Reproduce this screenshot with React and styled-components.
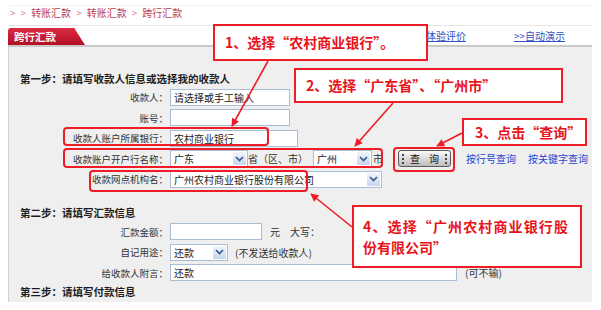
import React from "react";
import styled, { createGlobalStyle } from "styled-components";

const GlobalStyle = createGlobalStyle`
  html, body { margin: 0; padding: 0; background: #fff; }
  body { font-family: "Noto Sans CJK SC", "Noto Sans", sans-serif; }
`;

const Page = styled.div`
  position: relative;
  width: 601px;
  height: 310px;
  overflow: hidden;
  background: #fff;
`;

const TopRule = styled.div`
  margin: 5px 9px 0 10px;
  height: 1px;
  background: #f1f1f1;
`;

const Breadcrumb = styled.div`
  display: flex;
  align-items: center;
  gap: 5px;
  height: 13px;
  padding-left: 10px;
  font-size: 10px;
  line-height: 13px;
  color: #b8405c;
`;

const Crumb = styled.span`
  color: ${(p) => (p.$sep ? "#d98296" : "#b8405c")};
`;

const Frame = styled.div`
  margin: 6px 0 0 8px;
  width: 584px;
`;

const Header = styled.div`
  display: flex;
  align-items: flex-end;
  height: 19px;
  border-top: 1px solid #e6e6e6;
`;

const Tab = styled.div`
  width: 77px;
  height: 17px;
  box-sizing: border-box;
  padding-left: 6px;
  border-radius: 3px 0 0 0;
  clip-path: polygon(0 0, 86% 0, 100% 100%, 0 100%);
  background: linear-gradient(#dc2a40, #b30f26);
  color: #fff;
  font-size: 10.5px;
  font-weight: 700;
  line-height: 17px;
`;

const HeaderLinks = styled.div`
  display: flex;
  gap: 48px;
  margin: 0 27px 0 auto;
  align-self: center;
`;

const HeaderLink = styled.span`
  font-size: 10px;
  line-height: 13px;
  color: #2f4fc4;
  text-decoration: underline;
`;

const TabRule = styled.div`
  height: 2px;
  background: #cacaca;
`;

const Panel = styled.div`
  height: 255px;
  box-sizing: border-box;
  background: #efefef;
  border-left: 1px solid #cfcfcf;
  padding: 25px 0 0 11px;
`;

const StepTitle = styled.div`
  height: 14px;
  margin-top: ${(p) => p.$mt || 0}px;
  margin-bottom: ${(p) => p.$mb || 0}px;
  font-size: 10.5px;
  line-height: 14px;
  font-weight: 700;
  color: #1e1e1e;
`;

const Row = styled.div`
  display: flex;
  align-items: center;
  height: 20.5px;
`;

const Label = styled.span`
  flex-shrink: 0;
  width: 148px;
  margin-right: 2px;
  text-align: right;
  font-size: 9.5px;
  color: #333;
`;

const TextBox = styled.div`
  flex-shrink: 0;
  width: ${(p) => p.$w}px;
  height: 17px;
  box-sizing: border-box;
  border: 1px solid #a9bdd6;
  background: #fff;
  padding-left: 3px;
  font-size: 10px;
  line-height: 15px;
  color: #222;
  white-space: nowrap;
  overflow: hidden;
`;

const Select = styled.div`
  flex-shrink: 0;
  display: flex;
  width: ${(p) => p.$w}px;
  height: 17px;
  box-sizing: border-box;
  margin-left: ${(p) => p.$ml || 0}px;
  border: 1px solid #a9bdd6;
  background: #fff;
  font-size: 10px;
  line-height: 15px;
  color: #222;
`;

const SelectValue = styled.span`
  flex: 1;
  padding-left: 3px;
  white-space: nowrap;
  overflow: hidden;
`;

const SelectArrow = styled.span`
  display: flex;
  align-items: center;
  justify-content: center;
  width: 13px;
  border: 1px solid #fff;
  background: linear-gradient(#f0f5fc, #c6d6ee);
`;

const Note = styled.span`
  flex-shrink: 0;
  margin-left: ${(p) => p.$ml || 0}px;
  font-size: 10px;
  color: #333;
  white-space: nowrap;
`;

const QueryButton = styled.div`
  flex-shrink: 0;
  display: flex;
  align-items: center;
  justify-content: space-between;
  margin-left: 15px;
  width: 53px;
  height: 17px;
  box-sizing: border-box;
  padding: 0 3px;
  border: 1px solid #5a5a5a;
  border-radius: 3px;
  background: linear-gradient(#fafafa, #d8d8d8 55%, #bdbdbd);
  font-size: 10px;
  color: #111;
`;

const Grip = styled.span`
  height: 10px;
  border-left: 2px dotted #444;
`;

const BtnText = styled.span`
  letter-spacing: 9px;
  margin-right: -9px;
`;

const BlueLink = styled.span`
  flex-shrink: 0;
  margin-left: ${(p) => p.$ml}px;
  font-size: 10px;
  color: #2346d0;
  white-space: nowrap;
`;

const Highlight = styled.div`
  position: absolute;
  left: ${(p) => p.$x}px;
  top: ${(p) => p.$y}px;
  width: ${(p) => p.$w}px;
  height: ${(p) => p.$h}px;
  box-sizing: border-box;
  border: 2px solid #ee1c24;
  border-radius: 4px;
`;

const Callout = styled.div`
  position: absolute;
  left: ${(p) => p.$x}px;
  top: ${(p) => p.$y}px;
  width: ${(p) => p.$w}px;
  height: ${(p) => p.$h}px;
  box-sizing: border-box;
  padding-left: ${(p) => p.$pl}px;
  display: flex;
  flex-direction: column;
  justify-content: center;
  border: 2px solid #ee1c24;
  background: #fff;
  color: #e8141c;
  font-size: 14px;
  font-weight: 700;
  line-height: 21px;
  white-space: nowrap;
`;

const CalloutLine = styled.div`
  width: ${(p) => (p.$justify ? `${p.$justify}px` : "auto")};
  text-align: ${(p) => (p.$justify ? "justify" : "left")};
  text-align-last: ${(p) => (p.$justify ? "justify" : "auto")};
`;

const ArrowLayer = styled.svg`
  position: absolute;
  left: 0;
  top: 0;
  pointer-events: none;
`;

const Chevron = () => (
  <svg width="9" height="6" viewBox="0 0 9 6">
    <path d="M1 1 L4.5 4.6 L8 1" stroke="#3a5a8e" strokeWidth="1.7" fill="none" />
  </svg>
);

const Dropdown = ({ w, ml, value }) => (
  <Select $w={w} $ml={ml}>
    <SelectValue>{value}</SelectValue>
    <SelectArrow>
      <Chevron />
    </SelectArrow>
  </Select>
);

const arrows = [
  [268, 61, 232, 126],
  [393, 103, 355, 146],
  [462, 133, 437, 146],
  [352, 227, 311, 194],
];

export default function App() {
  return (
    <Page>
      <GlobalStyle />
      <TopRule />
      <Breadcrumb>
        <Crumb $sep>&gt;</Crumb>
        <Crumb $sep>&gt;</Crumb>
        <Crumb>转账汇款</Crumb>
        <Crumb $sep>&gt;</Crumb>
        <Crumb>转账汇款</Crumb>
        <Crumb $sep>&gt;</Crumb>
        <Crumb>跨行汇款</Crumb>
      </Breadcrumb>
      <Frame>
        <Header>
          <Tab>跨行汇款</Tab>
          <HeaderLinks>
            <HeaderLink>&gt;&gt;体验评价</HeaderLink>
            <HeaderLink>&gt;&gt;自动演示</HeaderLink>
          </HeaderLinks>
        </Header>
        <TabRule />
        <Panel>
          <StepTitle $mb={1}>第一步：请填写收款人信息或选择我的收款人</StepTitle>
          <Row>
            <Label>收款人：</Label>
            <TextBox $w={120}>请选择或手工输入</TextBox>
          </Row>
          <Row>
            <Label>账号：</Label>
            <TextBox $w={120} />
          </Row>
          <Row>
            <Label>收款人账户所属银行：</Label>
            <TextBox $w={128}>农村商业银行</TextBox>
          </Row>
          <Row>
            <Label>收款账户开户行名称：</Label>
            <Dropdown w={78} value="广东" />
            <Note>省（区、市）</Note>
            <Dropdown w={59} ml={5} value="广州" />
            <Note $ml={1}>市</Note>
            <QueryButton>
              <Grip />
              <BtnText>查询</BtnText>
              <Grip />
            </QueryButton>
            <BlueLink $ml={15}>按行号查询</BlueLink>
            <BlueLink $ml={12}>按关键字查询</BlueLink>
          </Row>
          <Row>
            <Label>收款网点机构名：</Label>
            <Dropdown w={212} value="广州农村商业银行股份有限公司" />
          </Row>

          <StepTitle $mt={16} $mb={2}>第二步：请填写汇款信息</StepTitle>
          <Row>
            <Label>汇款金额：</Label>
            <TextBox $w={92} />
            <Note $ml={8}>元</Note>
            <Note $ml={10}>大写：</Note>
          </Row>
          <Row>
            <Label>自记用途：</Label>
            <Dropdown w={58} value="还款" />
            <Note $ml={7}>(不发送给收款人)</Note>
          </Row>
          <Row>
            <Label>给收款人附言：</Label>
            <TextBox $w={287}>还款</TextBox>
            <Note $ml={8}>(可不输)</Note>
          </Row>
          <StepTitle $mt={2}>第三步：请填写付款信息</StepTitle>
        </Panel>
      </Frame>

      <Highlight $x={63} $y={127} $w={206} $h={19} />
      <Highlight $x={63} $y={148} $w={320} $h={20} />
      <Highlight $x={89} $y={170} $w={219} $h={22} />
      <Highlight $x={393} $y={147} $w={62} $h={25} />

      <Callout $x={213} $y={24} $w={215} $h={37} $pl={10}>
        <CalloutLine>1、选择“农村商业银行”。</CalloutLine>
      </Callout>
      <Callout $x={294} $y={68} $w={269} $h={35} $pl={10}>
        <CalloutLine>2、选择“广东省”、“广州市”</CalloutLine>
      </Callout>
      <Callout $x={462} $y={118} $w={125} $h={28} $pl={11}>
        <CalloutLine>3、点击“查询”</CalloutLine>
      </Callout>
      <Callout $x={352} $y={205} $w={230} $h={63} $pl={9}>
        <CalloutLine $justify={205}>4、选择“广州农村商业银行股</CalloutLine>
        <CalloutLine>份有限公司”</CalloutLine>
      </Callout>

      <ArrowLayer width="601" height="310" viewBox="0 0 601 310">
        <defs>
          <marker
            id="head"
            viewBox="0 0 10 10"
            refX="9"
            refY="5"
            markerWidth="9"
            markerHeight="8"
            markerUnits="userSpaceOnUse"
            orient="auto"
          >
            <path d="M0 0 L10 5 L0 10 Z" fill="#ee1c24" />
          </marker>
        </defs>
        {arrows.map(([x1, y1, x2, y2], i) => (
          <line
            key={i}
            x1={x1}
            y1={y1}
            x2={x2}
            y2={y2}
            stroke="#ee1c24"
            strokeWidth="1.6"
            markerEnd="url(#head)"
          />
        ))}
      </ArrowLayer>
    </Page>
  );
}
